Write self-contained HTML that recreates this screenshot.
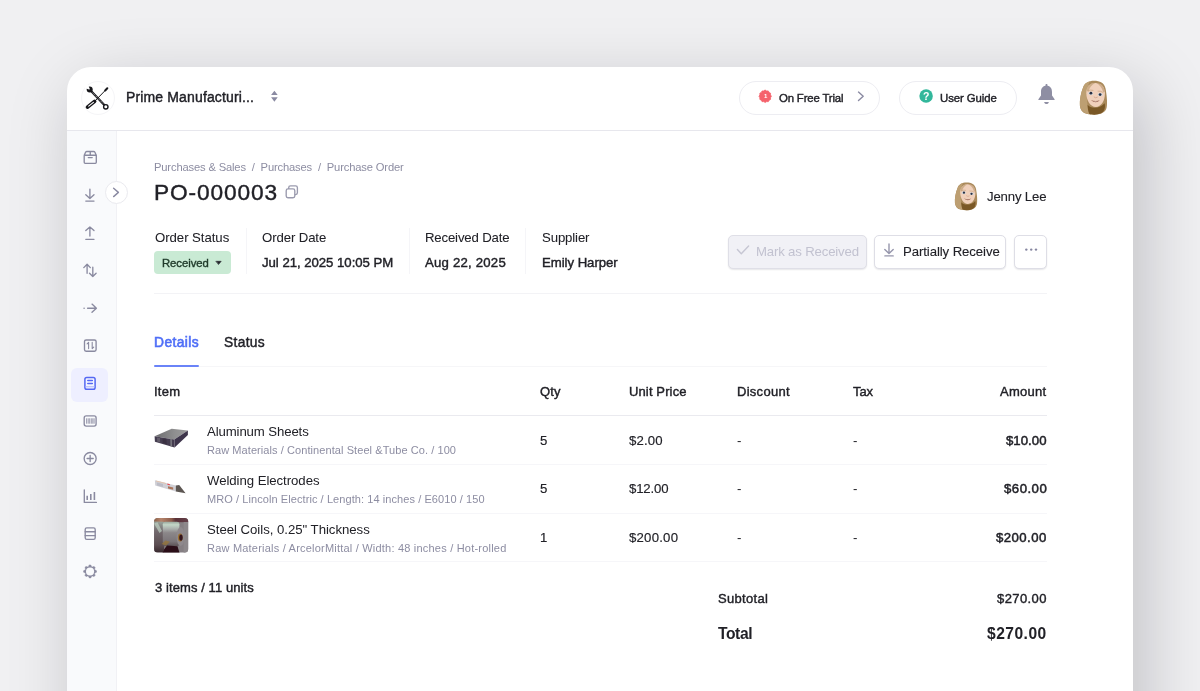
<!DOCTYPE html>
<html><head><meta charset="utf-8"><title>PO-000003</title>
<style>
*{box-sizing:border-box;margin:0;padding:0}
html,body{width:1200px;height:691px;overflow:hidden}
body{background:#ededee;font-family:"Liberation Sans",sans-serif;color:#1d1d22;position:relative}
.bg{position:absolute;left:0;top:0;width:1200px;height:691px;background:#f0f0f2}
.card{position:absolute;left:67px;top:67px;width:1066px;height:760px;background:#fff;border-radius:24px 24px 0 0;box-shadow:11px 20px 69px 0 rgba(8,8,22,.21)}
.hdr{position:absolute;left:67px;top:130px;width:1066px;height:1px;background:#e7e7ed}
.side{position:absolute;left:67px;top:131px;width:50px;height:560px;background:#f9fafc;border-right:1px solid #f1f1f5}
.t{position:absolute;white-space:pre;will-change:transform}
.ln{position:absolute;height:1px;background:#f6f6f9}
.pill{position:absolute;top:80.5px;height:34px;border:1px solid #ededf2;border-radius:17px;background:#fff}
.btn{position:absolute;top:234.5px;height:34px;border:1px solid #dedee6;border-radius:5px;background:#fff;box-shadow:0 1px 1.5px rgba(20,20,40,.10)}
svg{position:absolute;overflow:visible}
</style></head><body>
<div class="bg"></div>
<div class="card"></div>
<div class="hdr"></div>
<div class="side"></div>
<!-- header -->
<div style="position:absolute;left:80.5px;top:80.5px;width:34px;height:34px;border-radius:50%;border:1px solid #f5f5f7;background:#fff"></div>
<div class="pill" style="left:738.5px;width:141.5px"></div>
<div class="pill" style="left:899px;width:117.5px"></div>
<!-- status badge -->
<div style="position:absolute;left:154.25px;top:251px;width:76.25px;height:23px;border-radius:4px;background:#c9ead4"></div>
<!-- field dividers -->
<div style="position:absolute;left:246px;top:228px;width:1px;height:46px;background:#f5f5f8"></div>
<div style="position:absolute;left:409px;top:228px;width:1px;height:46px;background:#f5f5f8"></div>
<div style="position:absolute;left:525px;top:228px;width:1px;height:46px;background:#f5f5f8"></div>
<!-- buttons -->
<div class="btn" style="left:728px;width:139px;background:#f1f1f6;border-color:#dfdfe7"></div>
<div class="btn" style="left:874.25px;width:132px"></div>
<div class="btn" style="left:1014.25px;width:32.5px"></div>
<!-- rules -->
<div class="ln" style="left:154px;top:293px;width:893px;background:#f3f3f6"></div>
<div class="ln" style="left:154px;top:366px;width:893px;background:#f6f6f8"></div>
<div style="position:absolute;left:154.25px;top:365px;width:45px;height:2px;background:#6a83f8;border-radius:1px"></div>
<div class="ln" style="left:154px;top:415px;width:893px;background:#eaeaef"></div>
<div class="ln" style="left:154px;top:464px;width:893px"></div>
<div class="ln" style="left:154px;top:513px;width:893px"></div>
<div class="ln" style="left:154px;top:561px;width:893px"></div>
<!-- sidebar active -->
<div style="position:absolute;left:71px;top:368px;width:37.4px;height:33.5px;border-radius:6px;background:#eeefff"></div>
<!-- toggle -->
<div style="position:absolute;left:105px;top:181px;width:23px;height:23px;border-radius:50%;background:#fff;border:1px solid #eaeaef"></div>
<svg width="1200" height="691" viewBox="0 0 1200 691" style="left:0;top:0" fill="none" stroke-linecap="round" stroke-linejoin="round">
<g stroke="#17171b">
<path d="M91.3,91.3 L104.3,104.9" stroke-width="2.2"/>
<path d="M92.5,92.6 L103.5,104" stroke="#fff" stroke-width=".6" stroke-dasharray="1.4 .9" stroke-linecap="butt"/>
<circle cx="89.7" cy="89.6" r="3" fill="#17171b" stroke="none"/>
<path d="M89.2,89 L85.2,87.4 L87.4,84.8 Z" fill="#fff" stroke="#fff" stroke-width="1.1"/>
<circle cx="105.8" cy="106.8" r="2.2" fill="#fff" stroke-width="1.4"/>
<path d="M107.4,88.2 L95.2,100.8" stroke-width="1"/>
<path d="M107.3,88.3 L105.2,90.5" stroke-width="2"/>
<path d="M94.6,101.4 L87.5,107.1" stroke-width="3.7"/>
<path d="M93.4,102.4 L88.7,106.1" stroke="#fff" stroke-width="1.1"/>
</g>
<path d="M274.4,90.7 L277.7,95 L271.1,95 Z M274.4,101.7 L277.7,97.3 L271.1,97.3 Z" fill="#8a8aa2"/>
<polygon points="765.20,90.10 766.62,90.99 768.30,90.93 769.09,92.41 770.57,93.20 770.51,94.88 771.40,96.30 770.51,97.72 770.57,99.40 769.09,100.19 768.30,101.67 766.62,101.61 765.20,102.50 763.78,101.61 762.10,101.67 761.31,100.19 759.83,99.40 759.89,97.72 759.00,96.30 759.89,94.88 759.83,93.20 761.31,92.41 762.10,90.93 763.78,90.99" fill="#f5626c" stroke="#f5626c" stroke-width=".8"/>
<path d="M858.5,92.1 L863.2,96.35 L858.5,100.6" stroke="#8a8aa2" stroke-width="1.4"/>
<circle cx="926.1" cy="96.05" r="6.75" fill="#32b79b"/>
<path d="M1046.5,84 C1047.3,84 1047.7,84.7 1047.5,85.7 C1050.8,86.3 1052,88.8 1052,92 L1052,95.6 L1054.6,99.2 L1054.6,100.1 L1038.4,100.1 L1038.4,99.2 L1041,95.6 L1041,92 C1041,88.8 1042.2,86.3 1045.5,85.7 C1045.3,84.7 1045.7,84 1046.5,84 Z" fill="#8e8ea3"/>
<path d="M1044.2,101.9 L1048.8,101.9 C1048.6,103.2 1047.7,104 1046.5,104 C1045.3,104 1044.4,103.2 1044.2,101.9 Z" fill="#8e8ea3"/>
<g transform="translate(1079.4,80.7) scale(1.0)">
<path d="M3.6,7 C5,2 9.5,0 14.5,0 C20.5,0 25,1.8 26.2,8 C27.2,14 28.3,22 27.2,27 C26.2,31 22.5,33 19,33.6 C15,34.4 11,34 7,33 C3,32 1,29 0.5,25 C0,19 1.6,12 3.6,7 Z" fill="#aa8a5b"/>
<path d="M3.6,7 C4.8,3.6 7,1.6 10.5,0.6 C8,5 7.4,10 7.4,15 C7.4,21 8.5,27 10,33.6 C6,32.8 1.6,31 0.6,25.5 C0,19 1.6,12 3.6,7 Z" fill="#bd9f72"/>
<path d="M8.2,24 C11,28 20,28.5 25.2,22.5 C26.2,26 25.5,30.5 21.5,32.6 C17.5,34.4 12.5,34.2 9.8,33 C8.6,30 8.2,27 8.2,24 Z" fill="#7a5826"/>
<path d="M6.9,12.5 C6.9,5.5 10.4,2.3 16,2.3 C22,2.3 25.5,6.2 25.5,13 C25.5,20 21.8,26.2 16.4,26.2 C10.8,26.2 6.9,19.3 6.9,12.5 Z" fill="#f0d0bb"/>
<path d="M7.3,10 C8,5 11,2.6 15.6,2.4 C12.5,4 10.2,6.5 9.2,11 Z" fill="#b18f61" opacity=".55"/>
<path d="M25.4,11 C24.9,6 22,2.8 17,2.3 C20,4 22.6,6.8 23.8,11.2 Z" fill="#a98657" opacity=".5"/>
<ellipse cx="11.3" cy="12.5" rx="2.5" ry="1.55" fill="#cfdbe3"/><circle cx="11.5" cy="12.5" r="1.4" fill="#2a2f42"/>
<ellipse cx="20.9" cy="13.8" rx="2.5" ry="1.6" fill="#cfdbe3"/><circle cx="20.7" cy="13.9" r="1.4" fill="#2a2f42"/>
<path d="M8.6,10.1 Q11,8.7 13.6,9.6" stroke="#c8a37f" stroke-width=".7" fill="none"/>
<path d="M18.6,10.4 Q21.5,10 23.9,11.8" stroke="#c8a37f" stroke-width=".7" fill="none"/>
<path d="M14.7,16.4 Q16.2,17.9 17.9,16.6" stroke="#d2a288" stroke-width=".8" fill="none" stroke-linecap="round"/>
<path d="M11.4,19.2 Q15.8,21.2 20.4,19.6 Q16.4,23.8 11.4,19.2 Z" fill="#9c6552"/>
<path d="M12.9,19.9 Q15.9,20.8 18.9,20.1 Q16,21.5 12.9,19.9 Z" fill="#ead9d2"/>
</g>
<g transform="translate(954.5,182.4) scale(0.822)">
<path d="M3.6,7 C5,2 9.5,0 14.5,0 C20.5,0 25,1.8 26.2,8 C27.2,14 28.3,22 27.2,27 C26.2,31 22.5,33 19,33.6 C15,34.4 11,34 7,33 C3,32 1,29 0.5,25 C0,19 1.6,12 3.6,7 Z" fill="#aa8a5b"/>
<path d="M3.6,7 C4.8,3.6 7,1.6 10.5,0.6 C8,5 7.4,10 7.4,15 C7.4,21 8.5,27 10,33.6 C6,32.8 1.6,31 0.6,25.5 C0,19 1.6,12 3.6,7 Z" fill="#bd9f72"/>
<path d="M8.2,24 C11,28 20,28.5 25.2,22.5 C26.2,26 25.5,30.5 21.5,32.6 C17.5,34.4 12.5,34.2 9.8,33 C8.6,30 8.2,27 8.2,24 Z" fill="#7a5826"/>
<path d="M6.9,12.5 C6.9,5.5 10.4,2.3 16,2.3 C22,2.3 25.5,6.2 25.5,13 C25.5,20 21.8,26.2 16.4,26.2 C10.8,26.2 6.9,19.3 6.9,12.5 Z" fill="#f0d0bb"/>
<path d="M7.3,10 C8,5 11,2.6 15.6,2.4 C12.5,4 10.2,6.5 9.2,11 Z" fill="#b18f61" opacity=".55"/>
<path d="M25.4,11 C24.9,6 22,2.8 17,2.3 C20,4 22.6,6.8 23.8,11.2 Z" fill="#a98657" opacity=".5"/>
<ellipse cx="11.3" cy="12.5" rx="2.5" ry="1.55" fill="#cfdbe3"/><circle cx="11.5" cy="12.5" r="1.4" fill="#2a2f42"/>
<ellipse cx="20.9" cy="13.8" rx="2.5" ry="1.6" fill="#cfdbe3"/><circle cx="20.7" cy="13.9" r="1.4" fill="#2a2f42"/>
<path d="M8.6,10.1 Q11,8.7 13.6,9.6" stroke="#c8a37f" stroke-width=".7" fill="none"/>
<path d="M18.6,10.4 Q21.5,10 23.9,11.8" stroke="#c8a37f" stroke-width=".7" fill="none"/>
<path d="M14.7,16.4 Q16.2,17.9 17.9,16.6" stroke="#d2a288" stroke-width=".8" fill="none" stroke-linecap="round"/>
<path d="M11.4,19.2 Q15.8,21.2 20.4,19.6 Q16.4,23.8 11.4,19.2 Z" fill="#9c6552"/>
<path d="M12.9,19.9 Q15.9,20.8 18.9,20.1 Q16,21.5 12.9,19.9 Z" fill="#ead9d2"/>
</g>
<rect x="288.7" y="185.9" width="8.7" height="8.7" rx="1.8" stroke="#9a9aae" stroke-width="1.35"/>
<rect x="286.2" y="188.9" width="8.6" height="8.8" rx="1.8" fill="#fff" stroke="#9a9aae" stroke-width="1.35"/>
<path d="M216.2,261.3 L221.2,261.3 L218.7,264.3 Z" fill="#22232a" stroke="#22232a" stroke-width=".6"/>
<path d="M737.4,249.6 L741.3,253.8 L748.6,246" stroke="#c6c6d3" stroke-width="1.4"/>
<path d="M889,243.9 L889,253.3 M884.8,249.4 L889,253.5 L893.2,249.4 M884.9,255.9 L893.2,255.9" stroke="#9696ac" stroke-width="1.4"/>
<g fill="#8686a0"><circle cx="1026.3" cy="249.6" r="1.2"/><circle cx="1031.2" cy="249.6" r="1.2"/><circle cx="1036" cy="249.6" r="1.2"/></g>
<path d="M113.6,188.3 L118.4,192.4 L113.6,196.6" stroke="#8a8aa2" stroke-width="1.4"/>
<g stroke="#8a8aa0" stroke-width="1.35">
<path d="M84.2,155.2 L96.3,155.2 L96.3,162.3 Q96.3,163.3 95.3,163.3 L85.2,163.3 Q84.2,163.3 84.2,162.3 Z M84.2,155.2 L85.6,152.3 Q86,151.5 86.9,151.5 L93.6,151.5 Q94.5,151.5 94.9,152.3 L96.3,155.2 M90.25,151.5 L90.25,155.2 M88.3,157.6 L92.2,157.6"/>
<path d="M89.9,189.1 L89.9,198.2 M85.8,194.8 L89.9,198.5 L94,194.8 M85.8,201.1 L94,201.1"/>
<path d="M89.9,236 L89.9,227 M85.8,230.6 L89.9,226.9 L94,230.6 M85.8,239.3 L94,239.3"/>
<path d="M87.1,273.3 L87.1,264.3 M83.8,267.6 L87.1,264.2 L90.3,267.6 M92.8,267.2 L92.8,276.5 M89.5,273.3 L92.8,276.6 L96.1,273.3"/>
<path d="M87.6,308.2 L96.2,308.2 M92,304.1 L96.4,308.2 L92,312.3"/>
<circle cx="84.1" cy="308.2" r=".8" fill="#8a8aa0" stroke="none"/>
<rect x="84.5" y="340" width="11.6" height="11.2" rx="1.6"/>
<path d="M88.6,348.6 L88.6,342.3 L87.1,343.8 M92.2,342.3 L92.2,348.6 L93.7,347.1" stroke-width="1.1"/>
<rect x="84.2" y="415.9" width="11.9" height="10.2" rx="2"/>
<path d="M86.6,418.3 L86.6,423.7 M88.2,418.3 L88.2,423.7 M89.7,418.3 L89.7,423.7 M91.3,418.3 L91.3,423.7 M92.8,418.3 L92.8,423.7 M94.1,418.3 L94.1,423.7" stroke-width=".85" stroke-linecap="butt"/>
<circle cx="90.15" cy="458.5" r="6"/><path d="M87.1,458.5 L93.2,458.5 M90.15,455.4 L90.15,461.6"/>
<path d="M84.3,489.8 L84.3,502.4 L96.4,502.4"/>
<path d="M87.2,495.8 L87.2,499.9 M90.8,494 L90.8,499.9 M94.4,492.1 L94.4,499.9" stroke-width="1.6" stroke-linecap="butt"/>
<rect x="85.2" y="527.8" width="10" height="11.5" rx="1.6"/><path d="M85.2,531.7 L95.2,531.7 M85.2,535.6 L95.2,535.6"/>
<polygon points="89.34,564.99 90.76,564.99 91.67,566.72 92.25,566.96 94.11,566.38 95.12,567.39 94.54,569.25 94.78,569.83 96.51,570.74 96.51,572.16 94.78,573.07 94.54,573.65 95.12,575.51 94.11,576.52 92.25,575.94 91.67,576.18 90.76,577.91 89.34,577.91 88.43,576.18 87.85,575.94 85.99,576.52 84.98,575.51 85.56,573.65 85.32,573.07 83.59,572.16 83.59,570.74 85.32,569.83 85.56,569.25 84.98,567.39 85.99,566.38 87.85,566.96 88.43,566.72" fill="#8a8aa0" stroke="#8a8aa0" stroke-width=".5"/>
<circle cx="90.05" cy="571.45" r="4.05" fill="#f9fafc" stroke="none"/>
</g>
<g stroke="#5468f3" stroke-width="1.5"><rect x="84.9" y="377.4" width="10.2" height="11.9" rx="1.8" fill="#f4f5ff"/><path d="M87.8,380.6 L92.3,380.6 M87.8,383.5 L92.3,383.5"/></g>
<path d="M85.7,386.8 L94.3,386.8" stroke="#aab2fa" stroke-width="1"/>
<defs><linearGradient id="ga" x1="0" y1="0" x2="1" y2="0"><stop offset="0" stop-color="#6c6c6f"/><stop offset=".6" stop-color="#8f8f90"/><stop offset="1" stop-color="#9c9c9c"/></linearGradient></defs><g stroke="none">
<polygon points="154.6,436.2 171.7,428.7 187.9,430.4 174.3,439.4" fill="url(#ga)"/>
<polygon points="154.6,436.2 174.3,439.4 174.6,447.5 154.9,441.7" fill="#453d50"/>
<polygon points="157,437.6 160,438.1 160.2,442.4 157.2,441.5" fill="#625c6a"/>
<polygon points="162.5,438.5 166.5,439.2 166.7,444.3 162.7,443.1" fill="#3a3142"/>
<polygon points="174.3,439.4 187.9,430.4 187.9,435.1 174.6,447.5" fill="#3e354b"/>
<polygon points="170.3,438.8 171.8,439 172,446.7 170.5,446.3" fill="#7d7d82"/>
<polygon points="154.9,480.2 175.8,485.4 175.8,491.5 155.2,485.4" fill="#cfcfd5"/>
<polygon points="156,480.6 166,483.1 166,483.9 156,481.4" fill="#e3c4b0"/>
<polygon points="157,482.5 163,484 163,487 157,485.4" fill="#bcbcc6"/>
<polygon points="175.8,485.4 179.2,485 185.6,493.2 175.8,491.5" fill="#5c5652"/>
<polygon points="167.4,483.6 169.9,484.2 169.9,485.3 167.4,484.7" fill="#e8424c"/>
<polygon points="168,486.3 173.2,487.6 173.2,489.8 168,488.5" fill="#a9745a"/>
</g>
<defs><clipPath id="cp"><rect x="154.1" y="518" width="34.1" height="34.6" rx="3.6"/></clipPath>
<linearGradient id="g1" x1="0" y1="0" x2="0" y2="1"><stop offset="0" stop-color="#9aa79d"/><stop offset=".12" stop-color="#c3d6c7"/><stop offset=".3" stop-color="#a9adaa"/><stop offset=".45" stop-color="#8b8789"/><stop offset=".8" stop-color="#7b7579"/><stop offset="1" stop-color="#5c5256"/></linearGradient>
<linearGradient id="g2" x1="0" y1="0" x2="1" y2="0"><stop offset="0" stop-color="#8a6048"/><stop offset=".2" stop-color="#b5846c"/><stop offset=".5" stop-color="#8c5c4c"/><stop offset=".62" stop-color="#5a3038"/><stop offset="1" stop-color="#63404a"/></linearGradient>
<linearGradient id="g3" x1="0" y1="0" x2="0" y2="1"><stop offset="0" stop-color="#9aa59c"/><stop offset=".3" stop-color="#736a6e"/><stop offset=".75" stop-color="#5c4e52"/><stop offset="1" stop-color="#38282d"/></linearGradient></defs>
<g clip-path="url(#cp)" stroke="none">
<rect x="154" y="518" width="35" height="35" fill="#857f83"/>
<rect x="154" y="518" width="35" height="4.2" fill="url(#g2)"/>
<polygon points="154,521.5 163.5,521.8 166,534 163.5,552.6 154,552.6" fill="url(#g3)"/>
<polygon points="154,523.5 157.5,522.2 162,531 159.5,533" fill="#b9cbbd" opacity=".75"/>
<rect x="162.8" y="521.8" width="16.6" height="24.4" rx="2.4" fill="url(#g1)"/>
<ellipse cx="180.6" cy="536.5" rx="4" ry="9.6" fill="#8f898d"/>
<rect x="183.6" y="522" width="5" height="31" fill="#8d888b"/>
<ellipse cx="180.2" cy="537.6" rx="2.3" ry="4" fill="#9a7030"/>
<ellipse cx="181" cy="537.6" rx="1.7" ry="3.2" fill="#34141d"/>
<polygon points="164,549.5 167,545.6 177.5,546.2 179.5,553 162.5,553" fill="#2b0e18"/>
<polygon points="161.5,544 165.5,540.6 170,541.8 166,545.6" fill="#9a7634" opacity=".7"/>
</g>
</svg>
<div class="t" style="left:763.55px;top:92.3px;font-size:6px;line-height:8px;font-weight:700;color:#fff">1</div>
<div class="t" style="left:923.2px;top:89.8px;font-size:10.5px;line-height:12px;font-weight:700;color:#fff">?</div>
<div class="t" style="top:88.00px;font-size:14px;line-height:18px;color:#212127;letter-spacing:0.144px;-webkit-text-stroke:0.4px #212127;left:126.40px;">Prime Manufacturi...</div>
<div class="t" style="top:91.00px;font-size:11.4px;line-height:15px;color:#212127;letter-spacing:-0.164px;-webkit-text-stroke:0.4px #212127;left:779.25px;">On Free Trial</div>
<div class="t" style="top:91.00px;font-size:11.4px;line-height:15px;color:#212127;letter-spacing:-0.097px;-webkit-text-stroke:0.4px #212127;left:939.50px;">User Guide</div>
<div class="t" style="top:160.00px;font-size:11.2px;line-height:15px;color:#8d8da2;letter-spacing:-0.157px;left:154.25px;">Purchases &amp; Sales  /  Purchases  /  Purchase Order</div>
<div class="t" style="top:177.00px;font-size:22.7px;line-height:30px;color:#212127;letter-spacing:0.869px;-webkit-text-stroke:0.4px #212127;left:153.80px;">PO-000003</div>
<div class="t" style="top:229.00px;font-size:13.2px;line-height:17px;color:#212127;letter-spacing:-0.047px;-webkit-text-stroke:0.05px #212127;left:154.50px;">Order Status</div>
<div class="t" style="top:229.00px;font-size:13.2px;line-height:17px;color:#212127;letter-spacing:-0.109px;-webkit-text-stroke:0.05px #212127;left:261.75px;">Order Date</div>
<div class="t" style="top:229.00px;font-size:13.2px;line-height:17px;color:#212127;letter-spacing:-0.167px;-webkit-text-stroke:0.05px #212127;left:425.25px;">Received Date</div>
<div class="t" style="top:229.00px;font-size:13.2px;line-height:17px;color:#212127;letter-spacing:-0.127px;-webkit-text-stroke:0.05px #212127;left:541.50px;">Supplier</div>
<div class="t" style="top:256.00px;font-size:11.3px;line-height:15px;color:#1f3a2a;letter-spacing:-0.051px;-webkit-text-stroke:0.4px #1f3a2a;left:161.75px;">Received</div>
<div class="t" style="top:254.00px;font-size:13.2px;line-height:17px;color:#212127;letter-spacing:-0.036px;-webkit-text-stroke:0.4px #212127;left:261.75px;">Jul 21, 2025 10:05 PM</div>
<div class="t" style="top:254.00px;font-size:13.2px;line-height:17px;color:#212127;letter-spacing:0.207px;-webkit-text-stroke:0.4px #212127;left:425.25px;">Aug 22, 2025</div>
<div class="t" style="top:254.00px;font-size:13.2px;line-height:17px;color:#212127;letter-spacing:-0.043px;-webkit-text-stroke:0.4px #212127;left:541.50px;">Emily Harper</div>
<div class="t" style="top:243.00px;font-size:13.2px;line-height:17px;color:#c2c2d0;letter-spacing:-0.170px;left:756.00px;">Mark as Received</div>
<div class="t" style="top:243.00px;font-size:13.2px;line-height:17px;color:#212127;letter-spacing:-0.092px;-webkit-text-stroke:0.1px #212127;left:902.50px;">Partially Receive</div>
<div class="t" style="top:188.00px;font-size:13.2px;line-height:17px;color:#212127;letter-spacing:-0.170px;-webkit-text-stroke:0.1px #212127;left:987.00px;">Jenny Lee</div>
<div class="t" style="top:334.00px;font-size:13.8px;line-height:18px;color:#4f6ef7;letter-spacing:0.427px;-webkit-text-stroke:0.6px #4f6ef7;left:154.25px;">Details</div>
<div class="t" style="top:334.00px;font-size:13.8px;line-height:18px;color:#212127;letter-spacing:0.325px;-webkit-text-stroke:0.4px #212127;left:224.00px;">Status</div>
<div class="t" style="top:383.00px;font-size:13px;line-height:17px;color:#212127;letter-spacing:0.234px;-webkit-text-stroke:0.4px #212127;left:154.25px;">Item</div>
<div class="t" style="top:383.00px;font-size:13px;line-height:17px;color:#212127;letter-spacing:0.133px;-webkit-text-stroke:0.4px #212127;left:539.75px;">Qty</div>
<div class="t" style="top:383.00px;font-size:13px;line-height:17px;color:#212127;letter-spacing:0.127px;-webkit-text-stroke:0.4px #212127;left:629.00px;">Unit Price</div>
<div class="t" style="top:383.00px;font-size:13px;line-height:17px;color:#212127;letter-spacing:0.275px;-webkit-text-stroke:0.4px #212127;left:736.50px;">Discount</div>
<div class="t" style="top:383.00px;font-size:13px;line-height:17px;color:#212127;letter-spacing:-0.117px;-webkit-text-stroke:0.4px #212127;left:852.75px;">Tax</div>
<div class="t" style="top:383.00px;font-size:13px;line-height:17px;color:#212127;letter-spacing:0.287px;-webkit-text-stroke:0.4px #212127;right:153.21px;">Amount</div>
<div class="t" style="top:423.00px;font-size:13.2px;line-height:17px;color:#212127;letter-spacing:-0.115px;left:207.00px;">Aluminum Sheets</div>
<div class="t" style="top:443.00px;font-size:11px;line-height:14px;color:#8d8da2;letter-spacing:0.075px;left:207.00px;">Raw Materials / Continental Steel &amp;Tube Co. / 100</div>
<div class="t" style="top:432.00px;font-size:13.2px;line-height:17px;color:#212127;-webkit-text-stroke:0.15px #212127;left:540.00px;">5</div>
<div class="t" style="top:432.00px;font-size:13.2px;line-height:17px;color:#212127;letter-spacing:0.121px;-webkit-text-stroke:0.15px #212127;left:629.00px;">$2.00</div>
<div class="t" style="top:432.00px;font-size:13.2px;line-height:17px;color:#212127;left:736.75px;">-</div>
<div class="t" style="top:432.00px;font-size:13.2px;line-height:17px;color:#212127;left:852.75px;">-</div>
<div class="t" style="top:432.00px;font-size:13.2px;line-height:17px;color:#212127;letter-spacing:0.031px;-webkit-text-stroke:0.48px #212127;right:153.47px;">$10.00</div>
<div class="t" style="top:472.00px;font-size:13.2px;line-height:17px;color:#212127;letter-spacing:-0.051px;left:207.00px;">Welding Electrodes</div>
<div class="t" style="top:492.00px;font-size:11px;line-height:14px;color:#8d8da2;letter-spacing:0.076px;left:207.00px;">MRO / Lincoln Electric / Length: 14 inches / E6010 / 150</div>
<div class="t" style="top:480.00px;font-size:13.2px;line-height:17px;color:#212127;-webkit-text-stroke:0.15px #212127;left:540.00px;">5</div>
<div class="t" style="top:480.00px;font-size:13.2px;line-height:17px;color:#212127;letter-spacing:-0.169px;-webkit-text-stroke:0.15px #212127;left:629.00px;">$12.00</div>
<div class="t" style="top:480.00px;font-size:13.2px;line-height:17px;color:#212127;left:736.75px;">-</div>
<div class="t" style="top:480.00px;font-size:13.2px;line-height:17px;color:#212127;left:852.75px;">-</div>
<div class="t" style="top:480.00px;font-size:13.2px;line-height:17px;color:#212127;letter-spacing:0.481px;-webkit-text-stroke:0.48px #212127;right:153.02px;">$60.00</div>
<div class="t" style="top:521.00px;font-size:13.2px;line-height:17px;color:#212127;letter-spacing:-0.028px;left:207.00px;">Steel Coils, 0.25" Thickness</div>
<div class="t" style="top:541.00px;font-size:11px;line-height:14px;color:#8d8da2;letter-spacing:0.209px;left:207.00px;">Raw Materials / ArcelorMittal / Width: 48 inches / Hot-rolled</div>
<div class="t" style="top:529.00px;font-size:13.2px;line-height:17px;color:#212127;-webkit-text-stroke:0.15px #212127;left:540.00px;">1</div>
<div class="t" style="top:529.00px;font-size:13.2px;line-height:17px;color:#212127;letter-spacing:0.221px;-webkit-text-stroke:0.15px #212127;left:629.00px;">$200.00</div>
<div class="t" style="top:529.00px;font-size:13.2px;line-height:17px;color:#212127;left:736.75px;">-</div>
<div class="t" style="top:529.00px;font-size:13.2px;line-height:17px;color:#212127;left:852.75px;">-</div>
<div class="t" style="top:529.00px;font-size:13.2px;line-height:17px;color:#212127;letter-spacing:0.430px;-webkit-text-stroke:0.48px #212127;right:153.07px;">$200.00</div>
<div class="t" style="top:579.00px;font-size:13px;line-height:17px;color:#212127;letter-spacing:0.085px;-webkit-text-stroke:0.4px #212127;left:154.50px;">3 items / 11 units</div>
<div class="t" style="top:590.00px;font-size:13px;line-height:17px;color:#212127;letter-spacing:0.328px;-webkit-text-stroke:0.4px #212127;left:717.50px;">Subtotal</div>
<div class="t" style="top:590.00px;font-size:13px;line-height:17px;color:#212127;letter-spacing:0.417px;-webkit-text-stroke:0.4px #212127;right:152.98px;">$270.00</div>
<div class="t" style="top:624.00px;font-size:15.6px;line-height:20px;color:#212127;font-weight:700;letter-spacing:-0.398px;left:718.00px;">Total</div>
<div class="t" style="top:624.00px;font-size:15.6px;line-height:20px;color:#212127;font-weight:700;letter-spacing:0.471px;right:152.93px;">$270.00</div></body></html>
